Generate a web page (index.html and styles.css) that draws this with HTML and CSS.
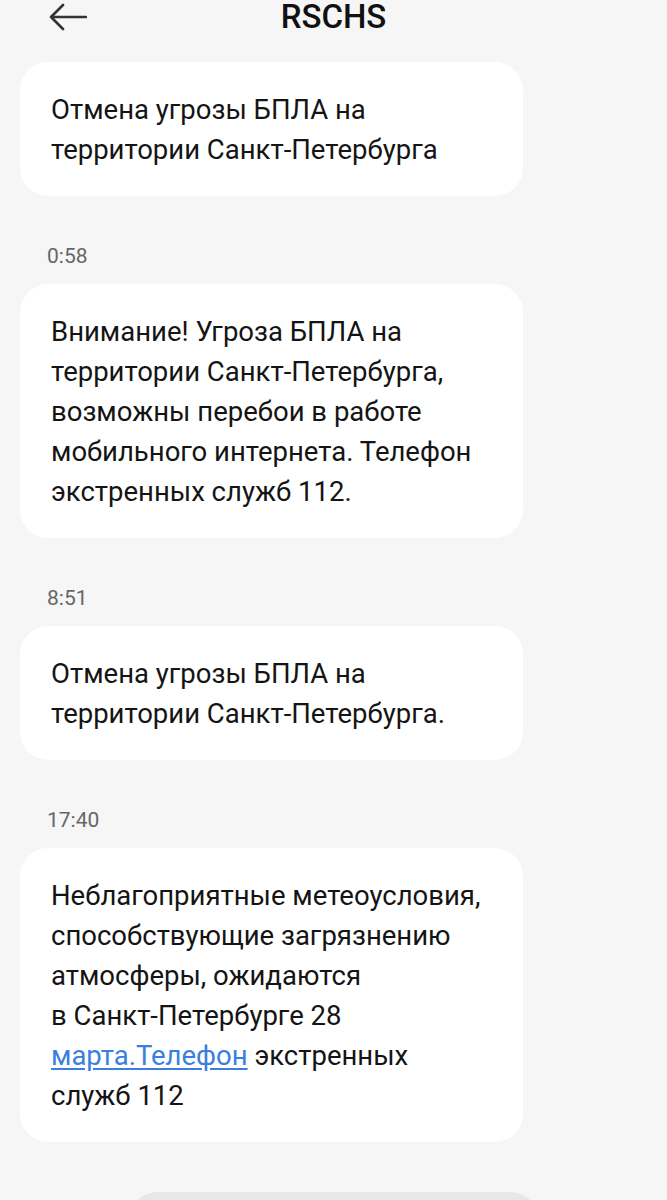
FILE: index.html
```html
<!DOCTYPE html>
<html lang="ru">
<head>
<meta charset="UTF-8">
<meta name="viewport" content="width=device-width, initial-scale=1.0">
<title>RSCHS</title>
<link rel="stylesheet" href="styles.css">
</head>
<body>
<div class="chat">
    <header class="topbar">
        <button class="back" aria-label="Назад">
            <svg width="38" height="28" viewBox="0 0 38 28">
                <path d="M2 14 H37 M14 2 L2 14 L14 26" fill="none" stroke="#333" stroke-width="2.6" stroke-linecap="round" stroke-linejoin="round"/>
            </svg>
        </button>
        <h1 class="title">RSCHS</h1>
        <span></span>
    </header>

    <div class="messages">
        <div class="bubble">Отмена угрозы БПЛА на территории <span class="nowrap">Санкт-Петербурга</span></div>

        <div class="time">0:58</div>
        <div class="bubble">Внимание! Угроза БПЛА на территории <span class="nowrap">Санкт-Петербурга,</span> возможны перебои в работе мобильного интернета. Телефон экстренных служб 112.</div>

        <div class="time">8:51</div>
        <div class="bubble">Отмена угрозы БПЛА на территории <span class="nowrap">Санкт-Петербурга.</span></div>

        <div class="time">17:40</div>
        <div class="bubble">Неблагоприятные метеоусловия, способствующие загрязнению атмосферы, ожидаются <span class="nowrap">в Санкт-Петербурге</span> 28 <a href="#">марта.Телефон</a> экстренных служб 112</div>
    </div>

    <div class="composer"></div>
</div>
</body>
</html>
```

FILE: styles.css
```css
html, body {
    margin: 0;
    background: #f6f6f6;
}
body {
    font-family: Roboto, "Noto Sans", sans-serif;
    color: #141414;
    height: 1200px;
    overflow: hidden;
}
.topbar {
    display: grid;
    grid-template-columns: 1fr auto 1fr;
    align-items: center;
    height: 32px;
}
.back {
    justify-self: start;
    margin-left: 49px;
    padding: 0;
    border: none;
    background: none;
    display: flex;
}
.title {
    margin: 0;
    font-size: 33px;
    font-weight: 500;
    line-height: 34px;
    color: #111;
}
.messages {
    padding: 30px 0 0 20px;
}
.bubble {
    width: 442px;
    padding: 28px 30px 26px 31px;
    background: #fff;
    border-radius: 28px;
    font-size: 27.5px;
    line-height: 40px;
}
.nowrap {
    white-space: nowrap;
}
.bubble a {
    color: #3a7fe0;
    text-decoration: underline;
    text-underline-offset: 3px;
}
.time {
    margin: 46px 0 14px 27px;
    font-size: 21px;
    line-height: 28px;
    color: #666;
}
.composer {
    margin: 50px 0 0 128px;
    width: 412px;
    height: 60px;
    background: #e8e8e8;
    border-radius: 30px;
}
```
